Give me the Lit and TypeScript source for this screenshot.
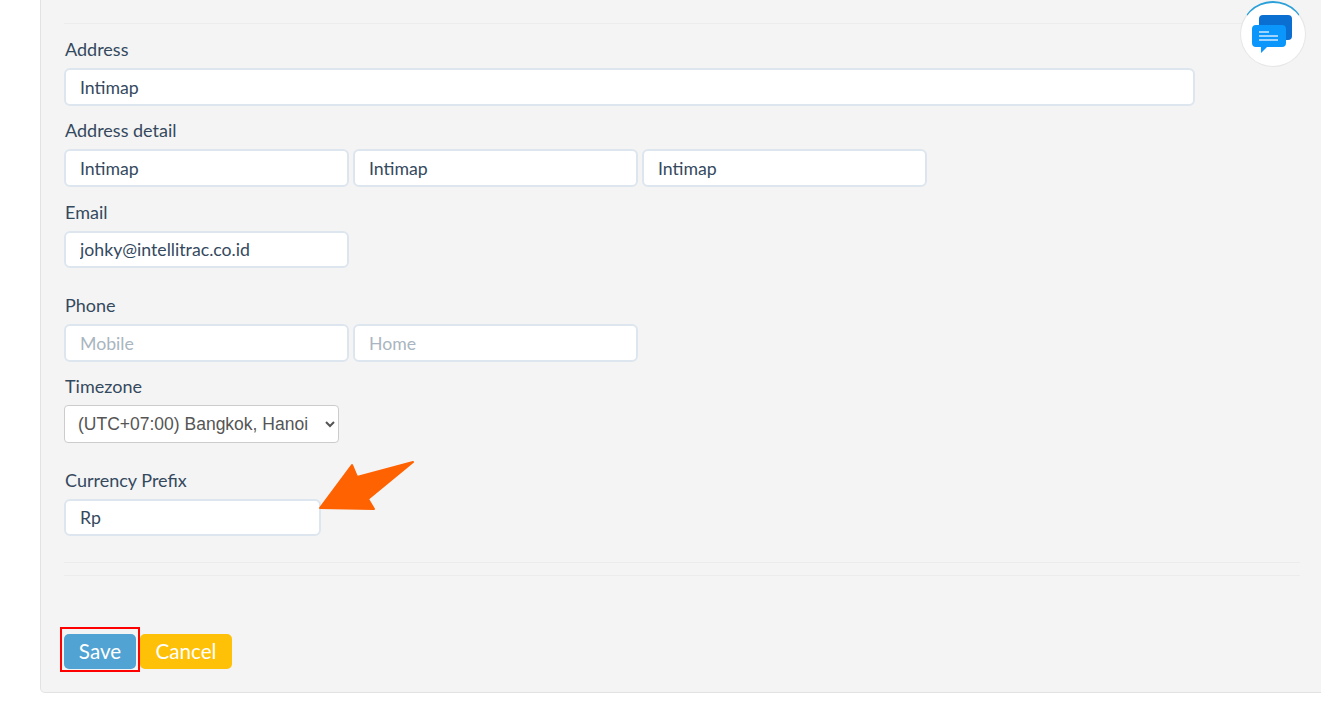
import { LitElement, html, css } from 'lit';
import { customElement } from 'lit/decorators.js';

@customElement('app-root')
export class AppRoot extends LitElement {
  static styles = css`
    :host {
      display: block;
      position: relative;
      height: 711px;
      overflow: hidden;
      background: #fff;
      font-family: Lato, 'Liberation Sans', sans-serif;
      color: #34495e;
    }

    .panel {
      box-sizing: border-box;
      height: 693px;
      margin: 0 -10px 0 40px;
      padding: 23px 30px 0 23px;
      background: #f4f4f4;
      border: 1px solid #e2e2e2;
      border-top: none;
      border-radius: 0 0 0 5px;
    }

    hr {
      margin: 0;
      border: none;
      border-top: 1px solid #ececec;
    }

    .field {
      display: flex;
      flex-direction: column;
    }

    label {
      padding-left: 1px;
      font-size: 18px;
      line-height: 18px;
      margin-bottom: 10px;
    }

    .row {
      display: flex;
      gap: 4px;
    }

    input {
      box-sizing: border-box;
      width: 285px;
      height: 38px;
      padding: 0 14px;
      border: 2px solid #dde6ef;
      border-radius: 6px;
      background: #fff;
      font-family: inherit;
      font-size: 17.7px;
      color: #34495e;
      outline: none;
    }

    input::placeholder {
      color: #a9b5c0;
      opacity: 1;
    }

    input.full { width: 1131px; }
    input.short { width: 257px; height: 37px; }
    input.mail { height: 37px; }

    select {
      box-sizing: border-box;
      width: 275px;
      height: 38px;
      padding: 0 9px;
      border: 1px solid #ccc;
      border-radius: 4px;
      background: #fff;
      font-family: 'Liberation Sans', Arial, sans-serif;
      font-size: 17.5px;
      color: #555;
      outline: none;
    }

    .mt-address { margin-top: 16px; }
    .mt-row { margin-top: 15px; }
    .mt-email { margin-top: 16px; }
    .mt-phone { margin-top: 28px; }
    .mt-currency { margin-top: 28px; }
    .mt-hr { margin-top: 26px; }
    .mt-hr2 { margin-top: 12px; }

    .actions {
      display: flex;
      align-items: flex-start;
      margin: 51px 0 0 -4px;
    }

    .highlight {
      display: flex;
      padding: 5px 2px 1px;
      border: 2px solid #f00;
    }

    button {
      height: 35px;
      padding: 0 0 2px;
      border: none;
      border-radius: 5px;
      color: #fff;
      font-family: inherit;
      font-size: 20.6px;
    }

    .save { width: 72px; background: #51a3d3; }
    .cancel { width: 92px; margin-top: 7px; background: #fec107; }

    .chat {
      position: absolute;
      left: 1240px;
      top: 1px;
      width: 66px;
      height: 66px;
      box-sizing: border-box;
      border-radius: 50%;
      background: #fff;
      border: 1px solid #e6e6e6;
      border-top: 2px solid #2a9fd8;
    }

    .chat svg { display: block; }

    .arrow {
      position: absolute;
      left: 318px;
      top: 460px;
    }
  `;

  render() {
    return html`
      <div class="panel">
        <hr />
        <div class="field mt-address">
          <label>Address</label>
          <input class="full" value="Intimap" />
        </div>
        <div class="field mt-row">
          <label>Address detail</label>
          <div class="row">
            <input value="Intimap" />
            <input value="Intimap" />
            <input value="Intimap" />
          </div>
        </div>
        <div class="field mt-email">
          <label>Email</label>
          <div class="row"><input class="mail" value="johky@intellitrac.co.id" /></div>
        </div>
        <div class="field mt-phone">
          <label>Phone</label>
          <div class="row">
            <input placeholder="Mobile" />
            <input placeholder="Home" />
          </div>
        </div>
        <div class="field mt-row">
          <label>Timezone</label>
          <div class="row">
            <select>
              <option>(UTC+07:00) Bangkok, Hanoi</option>
            </select>
          </div>
        </div>
        <div class="field mt-currency">
          <label>Currency Prefix</label>
          <div class="row"><input class="short" value="Rp" /></div>
        </div>
        <hr class="mt-hr" />
        <hr class="mt-hr2" />
        <div class="actions">
          <div class="highlight"><button class="save">Save</button></div>
          <button class="cancel">Cancel</button>
        </div>
      </div>

      <div class="chat">
        <svg width="64" height="63" viewBox="0 0 64 63">
          <path d="M18 16a4 4 0 0 1 4-4h25a4 4 0 0 1 4 4v17a4 4 0 0 1-4 4H22a4 4 0 0 1-4-4z" fill="#0a6fd0" />
          <path d="M11 26a4 4 0 0 1 4-4h26a4 4 0 0 1 4 4v14a4 4 0 0 1-4 4H26l-6 6v-6h-5a4 4 0 0 1-4-4z" fill="#0a96fb" />
          <path d="M18 29h10M18 33h19M18 37h19" stroke="#cfe9ff" stroke-width="1.4" />
        </svg>
      </div>

      <svg class="arrow" width="100" height="56" viewBox="0 0 100 56">
        <path d="M2 48 L34 5 L39 17 L95 2 L50 39 L56 49 Z" fill="#ff6200" stroke="#ff6200" stroke-width="2" stroke-linejoin="round" />
      </svg>
    `;
  }
}
